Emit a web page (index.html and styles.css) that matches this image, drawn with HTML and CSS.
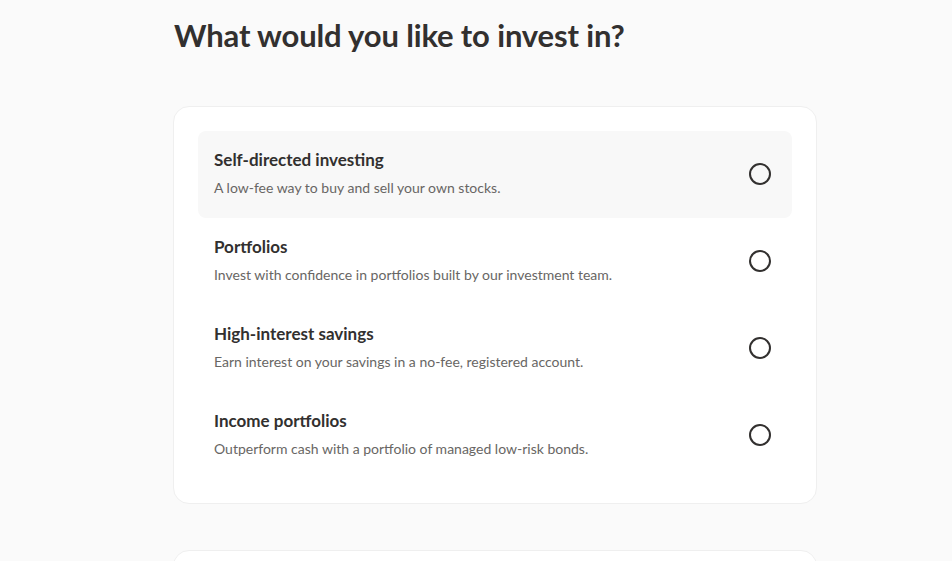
FILE: index.html
```html
<!DOCTYPE html>
<html lang="en">
<head>
<meta charset="utf-8">
<title>What would you like to invest in?</title>
<link rel="stylesheet" href="styles.css">
</head>
<body>
<main class="page">
  <h1 class="heading">What would you like to invest in?</h1>
  <section class="card">
    <div class="option option--hover">
      <div class="option-text">
        <div class="option-title">Self-directed investing</div>
        <div class="option-desc">A low-fee way to buy and sell your own stocks.</div>
      </div>
      <span class="radio"></span>
    </div>
    <div class="option">
      <div class="option-text">
        <div class="option-title">Portfolios</div>
        <div class="option-desc">Invest with confidence in portfolios built by our investment team.</div>
      </div>
      <span class="radio"></span>
    </div>
    <div class="option">
      <div class="option-text">
        <div class="option-title">High-interest savings</div>
        <div class="option-desc">Earn interest on your savings in a no-fee, registered account.</div>
      </div>
      <span class="radio"></span>
    </div>
    <div class="option">
      <div class="option-text">
        <div class="option-title">Income portfolios</div>
        <div class="option-desc">Outperform cash with a portfolio of managed low-risk bonds.</div>
      </div>
      <span class="radio"></span>
    </div>
  </section>
  <section class="card card--next"></section>
</main>
</body>
</html>
```
FILE: styles.css
```css
* { box-sizing: border-box; }
html, body { margin: 0; padding: 0; }
body {
  background: #fafafa;
  font-family: "Lato", "Noto Sans", sans-serif;
  color: #32302f;
  overflow: hidden;
  height: 561px;
}
.page {
  width: 644px;
  margin: 0 auto 0 173px;
  padding-top: 13px;
}
.heading {
  margin: 0 0 0 1px;
  font-size: 31px;
  line-height: 44px;
  font-weight: 700;
  letter-spacing: -0.15px;
  color: #32302f;
}
.card {
  margin-top: 49px;
  background: #fff;
  border: 1px solid #efefef;
  border-radius: 16px;
  padding: 24px;
}
.card--next {
  margin-top: 46px;
  height: 80px;
}
.option {
  display: flex;
  align-items: center;
  justify-content: space-between;
  height: 87px;
  padding: 0 21px 0 16px;
  border-radius: 8px;
}
.option--hover { background: #f8f8f8; }
.option-text {
  display: flex;
  flex-direction: column;
  gap: 6px;
  padding-bottom: 3px;
}
.option-title {
  font-size: 17px;
  line-height: 24px;
  font-weight: 700;
  color: #32302f;
}
.option-desc {
  font-size: 14px;
  line-height: 20px;
  color: #686664;
}
.radio {
  width: 22px;
  height: 22px;
  border: 2px solid #32302f;
  border-radius: 50%;
  flex: none;
  margin-bottom: 1px;
}
```
